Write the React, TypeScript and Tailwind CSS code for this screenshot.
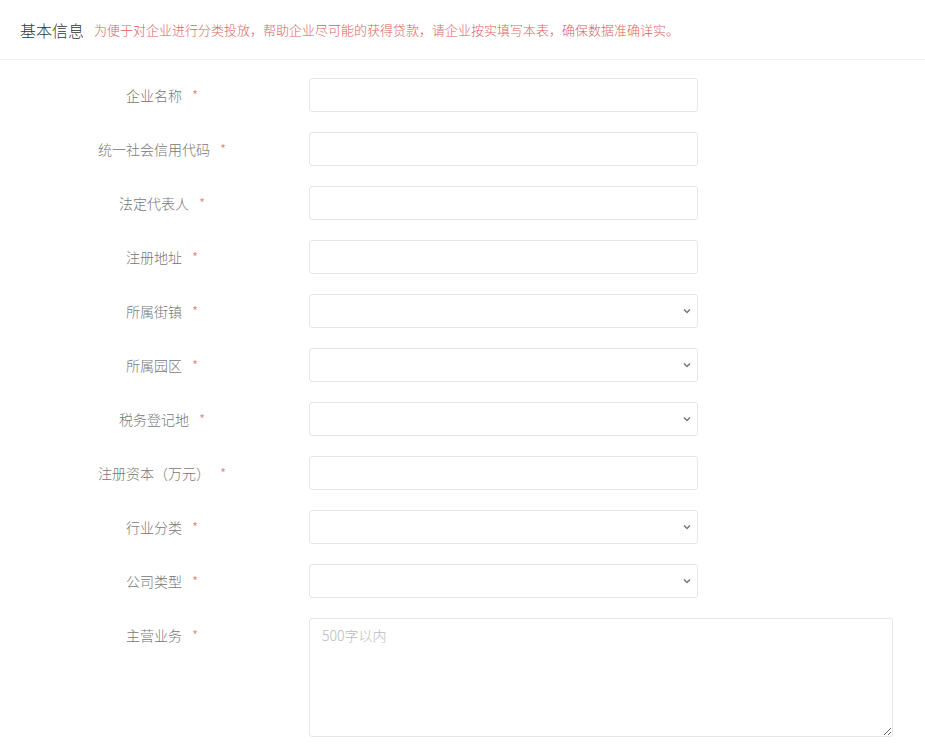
import React from "react";

type Field = { label: string; kind: "input" | "select" };

const fields: Field[] = [
  { label: "企业名称", kind: "input" },
  { label: "统一社会信用代码", kind: "input" },
  { label: "法定代表人", kind: "input" },
  { label: "注册地址", kind: "input" },
  { label: "所属街镇", kind: "select" },
  { label: "所属园区", kind: "select" },
  { label: "税务登记地", kind: "select" },
  { label: "注册资本（万元）", kind: "input" },
  { label: "行业分类", kind: "select" },
  { label: "公司类型", kind: "select" },
];

const font = { fontFamily: '"Microsoft YaHei", "Noto Sans CJK SC", sans-serif' };

function Label({ text }: { text: string }) {
  return (
    <div className="flex h-[34px] w-[284px] shrink-0 items-center justify-center text-[14px] font-light text-[#777]">
      <span>{text}</span>
      <span className="ml-[10px] text-[#e57a7a]">*</span>
    </div>
  );
}

function Chevron() {
  return (
    <svg width="12" height="12" viewBox="0 0 12 12" className="pointer-events-none absolute right-[4px] top-1/2 -translate-y-1/2">
      <path d="M3 4.5 L6 7.5 L9 4.5" fill="none" stroke="#777" strokeWidth="1.5" />
    </svg>
  );
}

export default function App() {
  return (
    <div className="min-h-screen w-[925px] bg-white" style={font}>
      {/* Header */}
      <div className="flex h-[60px] items-center border-b border-[#f0f0f0] pl-[20px]">
        <span className="text-[16px] font-light text-[#333]">基本信息</span>
        <span className="ml-[10px] text-[13px] font-light text-[#dd5f5f]">
          为便于对企业进行分类投放，帮助企业尽可能的获得贷款，请企业按实填写本表，确保数据准确详实。
        </span>
      </div>

      {/* Form */}
      <div className="flex flex-col gap-[20px] pl-[20px] pt-[18px]">
        {fields.map((f) => (
          <div key={f.label} className="flex items-start gap-[5px]">
            <Label text={f.label} />
            {f.kind === "input" ? (
              <input className="h-[34px] w-[389px] rounded-[3px] border border-[#e6e6e6] bg-white px-3 text-[14px] outline-none" />
            ) : (
              <div className="relative h-[34px] w-[389px] rounded-[3px] border border-[#e6e6e6] bg-white">
                <Chevron />
              </div>
            )}
          </div>
        ))}
        <div className="flex items-start gap-[5px]">
          <Label text="主营业务" />
          <textarea
            placeholder="500字以内"
            className="h-[119px] w-[584px] resize-y rounded-[3px] border border-[#e6e6e6] bg-white px-[12px] py-[6px] text-[14px] font-light outline-none placeholder:text-[#bbb]"
          />
        </div>
      </div>
    </div>
  );
}
